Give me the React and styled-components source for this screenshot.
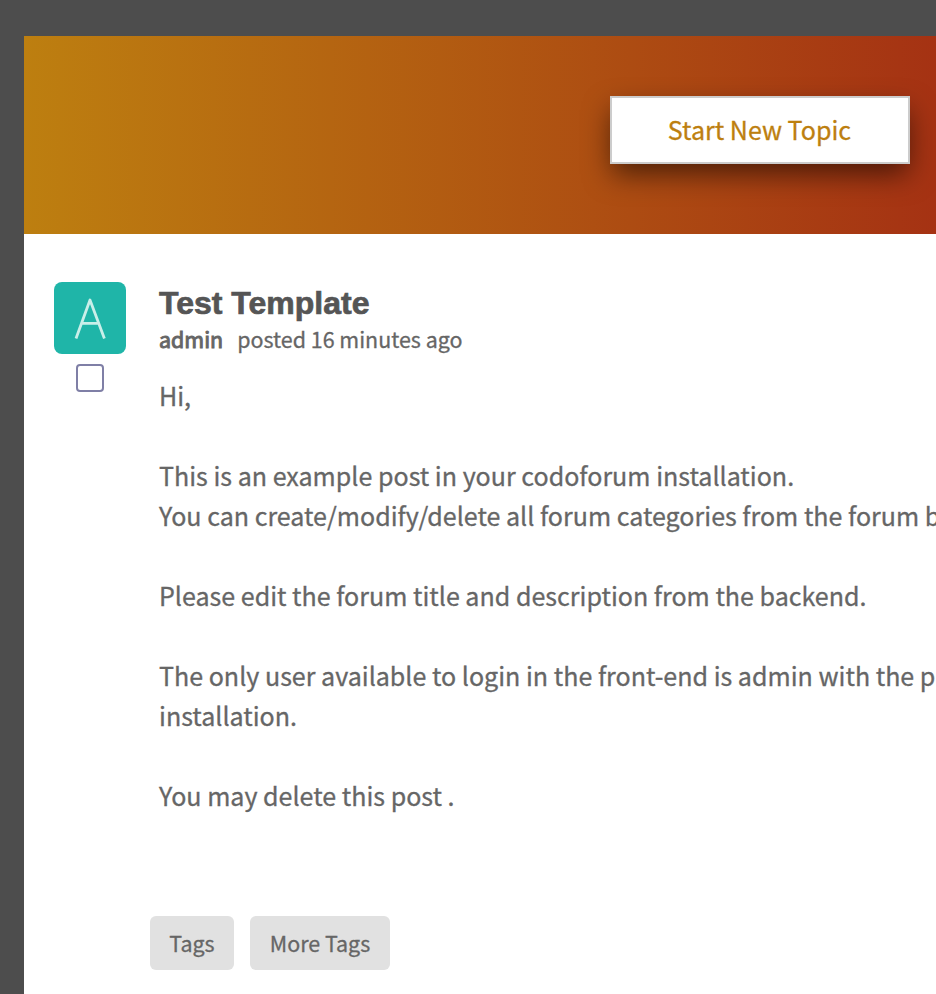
import React from 'react';
import styled, { createGlobalStyle } from 'styled-components';

const GlobalStyle = createGlobalStyle`
  * { box-sizing: border-box; }
  html, body { margin: 0; padding: 0; overflow: hidden; background: #4d4d4d; }
`;

const Page = styled.div`
  height: 994px;
  padding: 36px 0 0 24px;
  overflow: hidden;
  background: #4d4d4d;
  color: #666;
  font-family: "Noto Sans CJK SC", "Noto Sans", sans-serif;
  -webkit-text-stroke: 0.3px currentColor;
`;

const Panel = styled.main`
  height: 958px;
  display: flex;
  flex-direction: column;
  background: #fff;
`;

const Banner = styled.header`
  height: 198px;
  flex: none;
  display: flex;
  justify-content: flex-end;
  align-items: flex-start;
  padding: 60px 26px 0 0;
  background: linear-gradient(90deg, #bd7f10 0%, #a53213 100%);
`;

const TopicButton = styled.button`
  width: 300px;
  height: 68px;
  padding: 0 1px 2px 0;
  border: 2px solid #ccc;
  background: #fff;
  color: #bd7f10;
  font: 400 25.05px "Noto Sans CJK SC", "Noto Sans", sans-serif;
  -webkit-text-stroke: 0.3px currentColor;
  box-shadow: 0 12px 28px -2px rgba(0, 0, 0, 0.56);
`;

const Post = styled.article`
  display: flex;
  padding: 48px 0 0 30px;
`;

const Side = styled.div`
  width: 72px;
  flex: none;
  display: flex;
  flex-direction: column;
  align-items: center;
  gap: 10px;
`;

const Avatar = styled.div`
  width: 72px;
  height: 72px;
  border-radius: 8px;
  background: #1fb5a8;
`;

const Checkbox = styled.div`
  width: 28px;
  height: 28px;
  border: 2px solid #7f7fa6;
  border-radius: 4px;
`;

const Content = styled.div`
  flex: 1;
  min-width: 0;
  padding-left: 33px;
`;

const Title = styled.h2`
  margin: 2px 0 0;
  font: 700 32px/38px "Liberation Sans", Arial, sans-serif;
  color: #555;
  -webkit-text-stroke: 0.7px currentColor;
`;

const Meta = styled.div`
  display: flex;
  gap: 14px;
  height: 36px;
  font-size: 21.45px;
  line-height: 34px;
`;

const Author = styled.span`
  -webkit-text-stroke: 0.95px currentColor;
`;

const Body = styled.div`
  margin-top: 17px;
  height: 482px;
  font-size: 25.05px;
  line-height: 40px;
  white-space: pre;
`;

const Tags = styled.div`
  display: flex;
  gap: 16px;
  padding: 59px 0 0 126px;
`;

const Tag = styled.span`
  width: ${(p) => p.$width}px;
  height: 54px;
  border-radius: 6px;
  background: #e1e1e1;
  font-size: 21.45px;
  line-height: 54px;
  text-align: center;
`;

const post = `Hi,

This is an example post in your codoforum installation.
You can create/modify/delete all forum categories from the forum b

Please edit the forum title and description from the backend.

The only user available to login in the front-end is admin with the p
installation.

You may delete this post .`;

export default function App() {
  return (
    <Page>
      <GlobalStyle />
      <Panel>
        <Banner>
          <TopicButton>Start New Topic</TopicButton>
        </Banner>
        <Post>
          <Side>
            <Avatar>
              <svg width="72" height="72" viewBox="0 0 72 72" fill="none" stroke="#c9efe9" strokeWidth="2.8">
                <path d="M22 56.5 36 18l14.4 38.5M27.5 41.3h17.5" strokeLinejoin="round" />
              </svg>
            </Avatar>
            <Checkbox role="checkbox" aria-checked="false" />
          </Side>
          <Content>
            <Title>Test Template</Title>
            <Meta>
              <Author>admin</Author>
              <span>posted 16 minutes ago</span>
            </Meta>
            <Body>{post}</Body>
          </Content>
        </Post>
        <Tags>
          <Tag $width={84}>Tags</Tag>
          <Tag $width={140}>More Tags</Tag>
        </Tags>
      </Panel>
    </Page>
  );
}
